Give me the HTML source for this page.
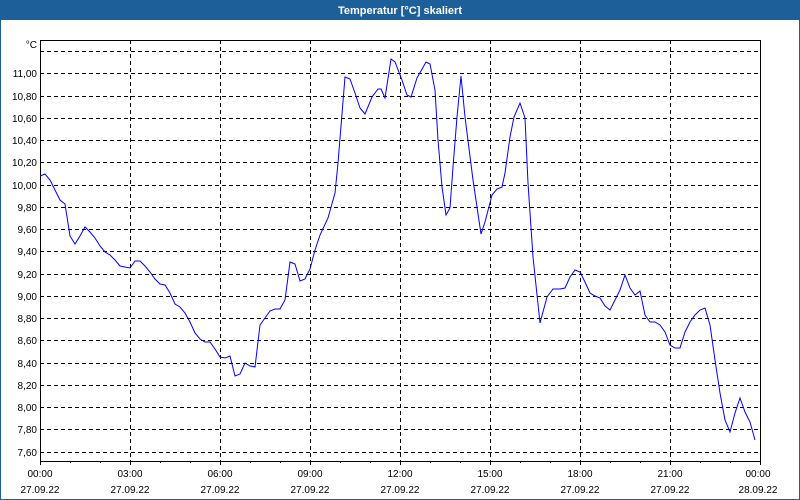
<!DOCTYPE html>
<html><head><meta charset="utf-8"><style>
html,body{margin:0;padding:0;background:#fff;}
body{width:800px;height:500px;position:relative;overflow:hidden;font-family:"Liberation Sans",sans-serif;}
</style></head><body>
<svg width="800" height="500" xmlns="http://www.w3.org/2000/svg" style="position:absolute;left:0;top:0" font-family="Liberation Sans, sans-serif">
<rect x="0" y="0" width="800" height="500" fill="#fff"/>
<rect x="0.5" y="0.5" width="799" height="499" fill="none" stroke="#1d5f98"/>
<rect x="0" y="0" width="800" height="20" fill="#1d5f98"/>
<text x="400" y="14" fill="#fff" font-size="11" font-weight="bold" text-anchor="middle">Temperatur [°C] skaliert</text>
<g stroke="#000" stroke-dasharray="4,3" stroke-width="1">
<line x1="40" x2="760" y1="51.5" y2="51.5"/>
<line x1="40" x2="760" y1="73.5" y2="73.5"/>
<line x1="40" x2="760" y1="96.5" y2="96.5"/>
<line x1="40" x2="760" y1="118.5" y2="118.5"/>
<line x1="40" x2="760" y1="140.5" y2="140.5"/>
<line x1="40" x2="760" y1="162.5" y2="162.5"/>
<line x1="40" x2="760" y1="185.5" y2="185.5"/>
<line x1="40" x2="760" y1="207.5" y2="207.5"/>
<line x1="40" x2="760" y1="229.5" y2="229.5"/>
<line x1="40" x2="760" y1="251.5" y2="251.5"/>
<line x1="40" x2="760" y1="274.5" y2="274.5"/>
<line x1="40" x2="760" y1="296.5" y2="296.5"/>
<line x1="40" x2="760" y1="318.5" y2="318.5"/>
<line x1="40" x2="760" y1="340.5" y2="340.5"/>
<line x1="40" x2="760" y1="363.5" y2="363.5"/>
<line x1="40" x2="760" y1="385.5" y2="385.5"/>
<line x1="40" x2="760" y1="407.5" y2="407.5"/>
<line x1="40" x2="760" y1="429.5" y2="429.5"/>
<line x1="40" x2="760" y1="452.5" y2="452.5"/>
<line y1="40" y2="461" x1="130.5" x2="130.5"/>
<line y1="40" y2="461" x1="220.5" x2="220.5"/>
<line y1="40" y2="461" x1="310.5" x2="310.5"/>
<line y1="40" y2="461" x1="400.5" x2="400.5"/>
<line y1="40" y2="461" x1="490.5" x2="490.5"/>
<line y1="40" y2="461" x1="580.5" x2="580.5"/>
<line y1="40" y2="461" x1="670.5" x2="670.5"/>
</g>
<g stroke="#000" stroke-width="1">
<line x1="70.5" x2="70.5" y1="461" y2="463"/><line x1="100.5" x2="100.5" y1="461" y2="463"/>
<line x1="130.5" x2="130.5" y1="461" y2="465"/><line x1="160.5" x2="160.5" y1="461" y2="463"/>
<line x1="190.5" x2="190.5" y1="461" y2="463"/><line x1="220.5" x2="220.5" y1="461" y2="465"/>
<line x1="250.5" x2="250.5" y1="461" y2="463"/><line x1="280.5" x2="280.5" y1="461" y2="463"/>
<line x1="310.5" x2="310.5" y1="461" y2="465"/><line x1="340.5" x2="340.5" y1="461" y2="463"/>
<line x1="370.5" x2="370.5" y1="461" y2="463"/><line x1="400.5" x2="400.5" y1="461" y2="465"/>
<line x1="430.5" x2="430.5" y1="461" y2="463"/><line x1="460.5" x2="460.5" y1="461" y2="463"/>
<line x1="490.5" x2="490.5" y1="461" y2="465"/><line x1="520.5" x2="520.5" y1="461" y2="463"/>
<line x1="550.5" x2="550.5" y1="461" y2="463"/><line x1="580.5" x2="580.5" y1="461" y2="465"/>
<line x1="610.5" x2="610.5" y1="461" y2="463"/><line x1="640.5" x2="640.5" y1="461" y2="463"/>
<line x1="670.5" x2="670.5" y1="461" y2="465"/><line x1="700.5" x2="700.5" y1="461" y2="463"/>
<line x1="730.5" x2="730.5" y1="461" y2="463"/><line x1="40.5" x2="40.5" y1="461" y2="465"/>
<line x1="760.5" x2="760.5" y1="461" y2="465"/>
</g>
<rect x="40.5" y="40.5" width="720" height="421" fill="none" stroke="#000"/>
<g font-size="10" fill="#000" text-anchor="end">
<text x="37" y="48">°C</text>
<text x="37" y="77">11,00</text><text x="37" y="100">10,80</text><text x="37" y="122">10,60</text>
<text x="37" y="144">10,40</text><text x="37" y="166">10,20</text><text x="37" y="189">10,00</text>
<text x="37" y="211">9,80</text><text x="37" y="233">9,60</text><text x="37" y="255">9,40</text>
<text x="37" y="278">9,20</text><text x="37" y="300">9,00</text><text x="37" y="322">8,80</text>
<text x="37" y="344">8,60</text><text x="37" y="367">8,40</text><text x="37" y="389">8,20</text>
<text x="37" y="411">8,00</text><text x="37" y="433">7,80</text><text x="37" y="456">7,60</text>
</g>
<g font-size="10" fill="#000" text-anchor="middle">
<text x="40" y="477">00:00</text><text x="40" y="493">27.09.22</text>
<text x="130" y="477">03:00</text><text x="130" y="493">27.09.22</text>
<text x="220" y="477">06:00</text><text x="220" y="493">27.09.22</text>
<text x="310" y="477">09:00</text><text x="310" y="493">27.09.22</text>
<text x="400" y="477">12:00</text><text x="400" y="493">27.09.22</text>
<text x="490" y="477">15:00</text><text x="490" y="493">27.09.22</text>
<text x="580" y="477">18:00</text><text x="580" y="493">27.09.22</text>
<text x="670" y="477">21:00</text><text x="670" y="493">27.09.22</text>
<text x="758" y="477">00:00</text><text x="758" y="493">28.09.22</text>
</g>
<polyline fill="none" stroke="#0000ff" stroke-width="1" points="40,176 45,174 50,180 55,190 60,200 65,204 70,236 75,244 80,236 85,227 90,232 95,238 100,246 105,252 110,255 115,260 120,266 125,267 130,268 135,261 140,261 145,266 150,272 155,279 160,284 165,285 170,293 175,304 180,307 185,313 190,322 195,333 200,339 205,342 210,342 215,349 220,357 225,358 230,356 235,376 240,374 245,363 250,366 255,367 260,325 265,318 270,311 275,309 280,309 285,300 290,262 295,264 300,281 305,279 310,269 315,250 320,235 328,218 335,193 338,163 345,77 350,79 355,93 360,108 365,114 372,97 378,89 381,89 385,98 391,59 395,62 402,80 407,95 411,97 417,78 426,62 430,64 435,90 438,140 442,187 446,215 450,208 453,167 457,117 461,76 465,117 473,180 481,234 485,222 492,195 497,189 502,187 505,173 510,137 514,117 520,103 525,118 528,183 533,257 540,323 547,297 553,289 560,289 565,288 570,277 575,270 580,272 585,282 590,293 595,296 600,298 605,306 610,310 615,300 620,290 625,275 630,288 635,295 640,291 645,315 650,322 655,322 660,325 665,332 670,345 675,348 680,348 685,332 690,322 695,315 700,310 705,308 710,325 715,360 720,393 725,420 730,432 735,413 740,398 745,412 750,422 755,440"/>
</svg>
</body></html>
